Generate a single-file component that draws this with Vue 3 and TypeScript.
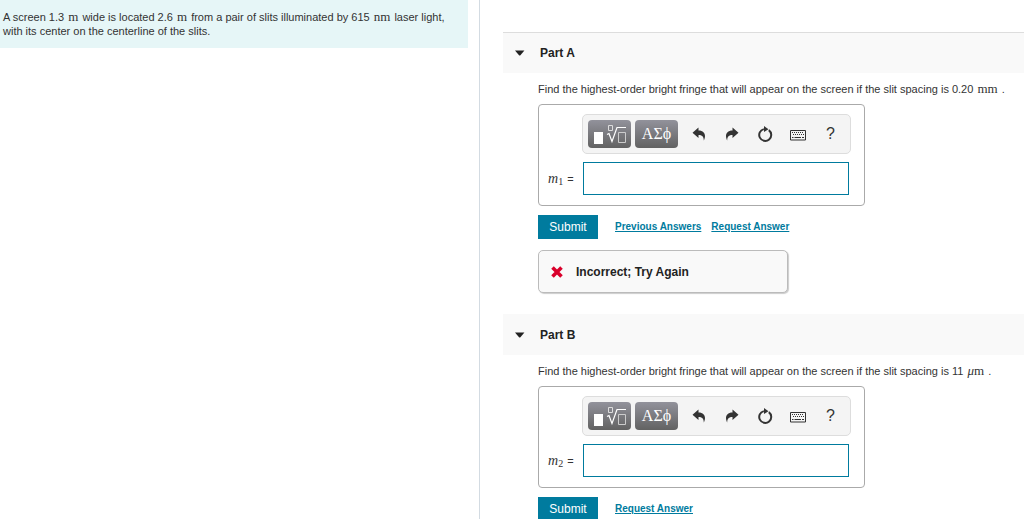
<script setup lang="ts">
interface Part {
  id: string
  title: string
  value: string
  mu: boolean
  unit: string
  sub: string
  previous: boolean
  feedback: string
}

const parts: Part[] = [
  { id: 'a', title: 'Part A', value: '0.20', mu: false, unit: 'mm', sub: '1', previous: true, feedback: 'Incorrect; Try Again' },
  { id: 'b', title: 'Part B', value: '11', mu: true, unit: 'm', sub: '2', previous: false, feedback: '' },
]
</script>

<template>
  <div class="shell">
    <aside class="intro">
      <p class="problem">
        A screen 1.3 <span class="math">m</span> wide is located 2.6 <span class="math">m</span> from a pair of slits
        illuminated by 615 <span class="math">nm</span> laser light, with its center on the centerline of the slits.
      </p>
    </aside>
    <main class="work">
      <section v-for="part in parts" :key="part.id" class="part">
        <h2 class="part-head">
          <button type="button" class="toggle">
            <svg class="caret" viewBox="0 0 10 6" aria-hidden="true"><path d="M0 .5h9.4L5.4 5.2Q4.7 5.8 4 5.2Z" /></svg>
            {{ part.title }}
          </button>
        </h2>
        <div class="part-body">
          <p class="question">
            Find the highest-order bright fringe that will appear on the screen if the slit spacing is
            {{ part.value }} <span class="math"><i v-if="part.mu">μ</i>{{ part.unit }}</span> .
          </p>
          <div class="answer">
            <div class="toolbar">
              <button type="button" class="tool dark" aria-label="Templates">
                <svg width="32" height="20" viewBox="0 0 32 20" fill="none" stroke="#fff">
                  <path d="M0 8h9v12H0z" fill="#fff" stroke="none" />
                  <path d="M14.500 1.500h4v5h-4z" stroke="#ddd" />
                  <path d="M13 10.500l2-1 3 8 5-14h10" stroke-width="1.200" />
                  <path d="M24.500 8.500h7v10h-7z" stroke="#ccc" />
                </svg>
              </button>
              <button type="button" class="tool dark greek">ΑΣϕ</button>
              <button type="button" class="tool" aria-label="Undo">
                <svg width="14" height="14" viewBox="0 0 14 14"><path d="M6.500 .500v3c4.500 0 6.500 2.500 6.500 5.500 0 1.800-.5 3-1.200 4.500C11.800 9.500 10 8 6.500 8v3L.5 5.700Z" /></svg>
              </button>
              <button type="button" class="tool" aria-label="Redo">
                <svg width="14" height="14" viewBox="0 0 14 14"><path d="M7.500 .500v3C3 3.500 1 6 1 9c0 1.800.5 3 1.200 4.500C2.200 9.500 4 8 7.500 8v3l6-5.300Z" /></svg>
              </button>
              <button type="button" class="tool" aria-label="Reset">
                <svg width="16" height="16" viewBox="0 0 16 16"><path d="M11.800 4.100A6 6 0 1 1 6.800 3.100" fill="none" stroke="#333" stroke-width="2" /><path d="M7 0l4.500 3.300L7 6Z" /></svg>
              </button>
              <button type="button" class="tool" aria-label="Keyboard">
                <svg width="18" height="14" viewBox="0 0 18 14" fill="none" stroke="#333">
                  <path d="M1.500 3.500h15v9.500h-15z" />
                  <path d="M3 5.500h12M4 7.500h11" stroke-dasharray="1 1" />
                  <path d="M3 10.500h1.500M5.500 10.500h6.500M13 10.500h2" />
                </svg>
              </button>
              <button type="button" class="tool help" aria-label="Help">?</button>
            </div>
            <div class="entry">
              <label :for="'answer-' + part.id"><i>m</i><sub>{{ part.sub }}</sub><span class="eq">=</span></label>
              <input :id="'answer-' + part.id" type="text" />
            </div>
          </div>
          <div class="actions">
            <button type="button" class="submit">Submit</button>
            <a v-if="part.previous" href="#">Previous Answers</a>
            <a href="#">Request Answer</a>
          </div>
          <div v-if="part.feedback" class="feedback" role="status">
            <svg width="12" height="12" viewBox="0 0 12 12" aria-hidden="true"><path d="M1.500 1.500l9 9M10.500 1.500l-9 9" stroke="#d9002b" stroke-width="3.600" /></svg>
            {{ part.feedback }}
          </div>
        </div>
      </section>
    </main>
  </div>
</template>

<style>
body {
  margin: 0;
}
</style>

<style scoped>
.shell {
  display: grid;
  grid-template-columns: minmax(0, 15fr) minmax(0, 17fr);
  height: 100vh;
  overflow: hidden;
  background: #fff;
  color: #333;
  font: 11px/14px "Liberation Sans", Arial, sans-serif;
}
p, h2 {
  margin: 0;
}
button {
  font-family: inherit;
  border: 0;
  padding: 0;
  cursor: pointer;
}
.intro {
  border-right: 1px solid #d3dbe2;
  padding-right: 11px;
}
.problem {
  background: #e6f6f7;
  padding: 10px 12px 10px 3px;
}
.math {
  margin: 0 1px;
  font-family: "Liberation Serif", "Times New Roman", serif;
  font-size: 13px;
  line-height: 0;
}
.work {
  padding: 32px 0 0 23px;
}
.part + .part {
  margin-top: 21px;
}
.part-head {
  box-sizing: border-box;
  height: 41px;
  background: #f9f9f9;
  display: flex;
}
.part:first-child .part-head {
  border-top: 1px solid #ddd;
}
.toggle {
  display: flex;
  align-items: center;
  gap: 15px;
  flex: 1;
  padding-left: 12px;
  background: transparent;
  color: #222;
  font-size: 12px;
  font-weight: bold;
}
.caret {
  width: 10px;
  height: 6px;
  fill: #222;
}
.part-body {
  padding: 9px 0 0 35px;
}
.question {
  white-space: nowrap;
}
.answer {
  box-sizing: border-box;
  max-width: 327px;
  margin-top: 8px;
  padding: 9px 13px 10px 9px;
  border: 1px solid #aaa;
  border-radius: 4px;
}
.toolbar {
  box-sizing: border-box;
  height: 40px;
  margin-left: 34px;
  padding-left: 5px;
  border: 1px solid #ddd;
  border-radius: 5px;
  background: #f4f4f4;
  display: flex;
  align-items: center;
}
.tool {
  width: 33px;
  height: 28px;
  display: flex;
  align-items: center;
  justify-content: center;
  background: transparent;
  color: #333;
  fill: #333;
}
.tool.dark {
  width: 43px;
  margin-right: 4px;
  border-radius: 4px;
  color: #fff;
  background: linear-gradient(#92929b, #626262);
}
.greek {
  font: 16px/28px "Liberation Serif", "Times New Roman", serif;
}
.help {
  font-size: 16px;
}
.entry {
  display: flex;
  align-items: center;
  margin-top: 8px;
}
.entry label {
  width: 35px;
  font: 14px/16px "Liberation Serif", "Times New Roman", serif;
  white-space: nowrap;
}
.entry sub {
  font-size: 10px;
  line-height: 1;
  vertical-align: -2px;
}
.eq {
  margin-left: 4px;
  font: 11px/14px "Liberation Sans", Arial, sans-serif;
}
.entry input {
  box-sizing: border-box;
  flex: 1;
  min-width: 0;
  height: 33px;
  margin-right: 2px;
  border: 1px solid #007b9e;
  padding: 0 6px;
  background: #fff;
  outline: none;
}
.actions {
  display: flex;
  align-items: center;
  gap: 10px;
  margin-top: 9px;
}
.submit {
  width: 60px;
  height: 24px;
  margin-right: 7px;
  background: #007b9e;
  color: #fff;
  font-size: 12px;
}
.actions a {
  color: #007b9e;
  font-size: 10px;
  font-weight: bold;
}
.feedback {
  box-sizing: border-box;
  max-width: 250px;
  height: 43px;
  margin-top: 11px;
  padding-left: 12px;
  display: flex;
  align-items: center;
  gap: 13px;
  border: 1px solid #bbb;
  border-radius: 5px;
  box-shadow: 1px 1px 1px #ccc;
  background: #f9f9f9;
  color: #222;
  font-size: 12px;
  font-weight: bold;
}
</style>
